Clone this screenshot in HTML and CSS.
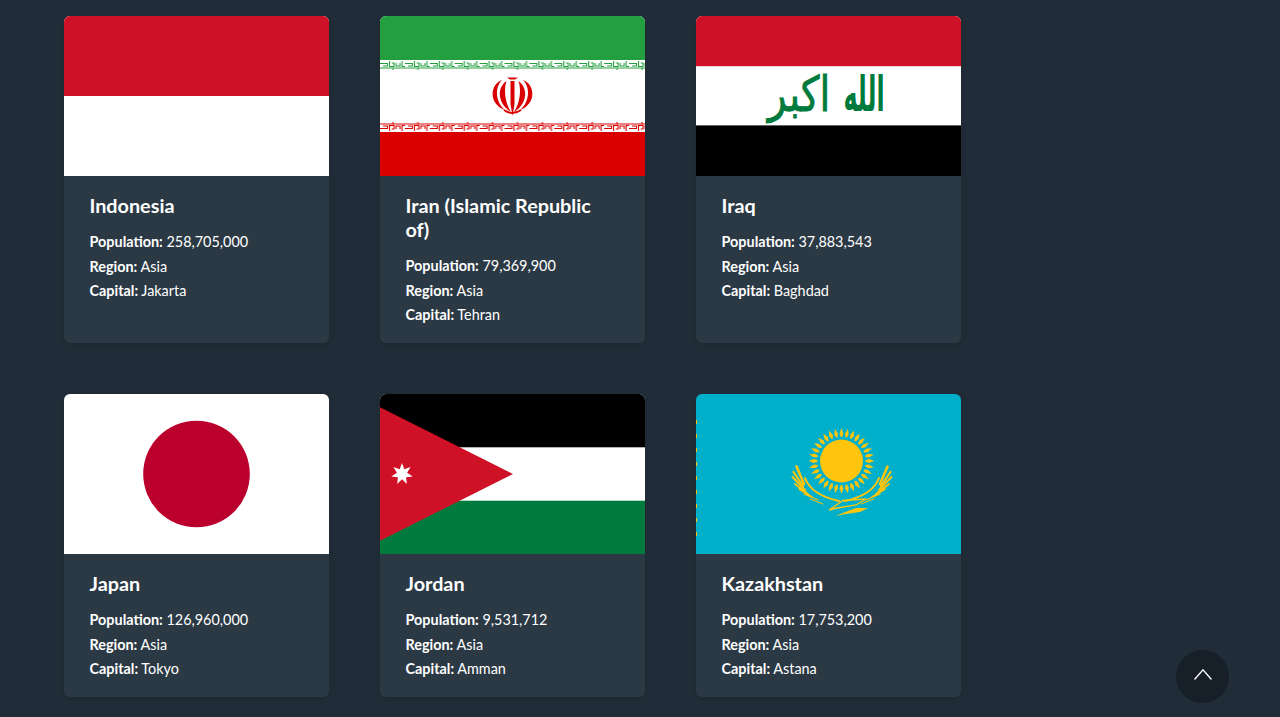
FILE: index.html
```html
<!DOCTYPE html>
<html lang="en">
  <head>
    <meta charset="UTF-8" />
    <meta name="viewport" content="width=device-width, initial-scale=1.0" />
    <title>Countries</title>
    <link rel="stylesheet" href="styles.css">
  </head>
  <body>
    <main class="country-grid">
      <!-- Indonesia -->
      <article class="card">
        <svg class="flag" viewBox="0 0 265 160" role="img" aria-label="Flag of Indonesia">
          <rect width="265" height="160" fill="#fff" />
          <rect width="265" height="80" fill="#ce1126" />
        </svg>
        <div class="card-body">
          <h2>Indonesia</h2>
          <p><b>Population:</b> 258,705,000</p>
          <p><b>Region:</b> Asia</p>
          <p><b>Capital:</b> Jakarta</p>
        </div>
      </article>

      <!-- Iran -->
      <article class="card">
        <svg class="flag" viewBox="0 0 265 160" role="img" aria-label="Flag of Iran">
          <defs>
            <pattern id="kufic-green" width="24.900" height="10" patternUnits="userSpaceOnUse" y="44">
              <path d="M0 3.500H7.500V6H3M9.500 1V6.500H14V3H11.700M16 3V6H20V3M22 1V6.500H24.900M0 8H24.900M13 8V10" stroke="#239f40" stroke-width="1.100" fill="none" />
            </pattern>
            <pattern id="kufic-red" width="24.900" height="10" patternUnits="userSpaceOnUse" y="106">
              <path transform="translate(0 10) scale(1 -1)" d="M0 3.500H7.500V6H3M9.500 1V6.500H14V3H11.700M16 3V6H20V3M22 1V6.500H24.900M0 8H24.900M13 8V10" stroke="#da0000" stroke-width="1.100" fill="none" />
            </pattern>
          </defs>
          <rect width="265" height="160" fill="#fff" />
          <rect width="265" height="44" fill="#239f40" />
          <rect y="116" width="265" height="44" fill="#da0000" />
          <rect y="44" width="265" height="10" fill="url(#kufic-green)" />
          <rect y="106" width="265" height="10" fill="url(#kufic-red)" />
          <g fill="#da0000">
            <path d="M127 61.500H138L135 63.500H130Z" />
            <path d="M130.500 65H134.500V88L132.500 100L130.500 88Z" />
            <path d="M122 64C110 68 108 88 125 94C116 87 114 72 122 64Z" />
            <path d="M143 64C155 68 157 88 140 94C149 87 151 72 143 64Z" />
            <path d="M126.500 65C116.500 72 117.500 88 131 96C125 87 123.500 74 126.500 65Z" />
            <path d="M138.500 65C148.500 72 147.500 88 134 96C140 87 141.500 74 138.500 65Z" />
          </g>
          <path d="M124 94Q132.500 100 141 94" fill="none" stroke="#da0000" stroke-width="1.800" />
        </svg>
        <div class="card-body">
          <h2>Iran (Islamic Republic of)</h2>
          <p><b>Population:</b> 79,369,900</p>
          <p><b>Region:</b> Asia</p>
          <p><b>Capital:</b> Tehran</p>
        </div>
      </article>

      <!-- Iraq -->
      <article class="card">
        <svg class="flag" viewBox="0 0 265 160" role="img" aria-label="Flag of Iraq">
          <rect width="265" height="160" fill="#fff" />
          <rect width="265" height="50.200" fill="#ce1126" />
          <rect y="109.400" width="265" height="50.600" fill="#000" />
          <text class="takbir" transform="translate(168 95) scale(.66 1.350)" text-anchor="middle">الله</text>
          <text class="takbir takbir-thin" transform="translate(103 95) scale(1.080 1.350)" text-anchor="middle">اكبر</text>
        </svg>
        <div class="card-body">
          <h2>Iraq</h2>
          <p><b>Population:</b> 37,883,543</p>
          <p><b>Region:</b> Asia</p>
          <p><b>Capital:</b> Baghdad</p>
        </div>
      </article>

      <!-- Japan -->
      <article class="card">
        <svg class="flag" viewBox="0 0 265 160" role="img" aria-label="Flag of Japan">
          <rect width="265" height="160" fill="#fff" />
          <circle cx="132.500" cy="80" r="53.300" fill="#bc002d" />
        </svg>
        <div class="card-body">
          <h2>Japan</h2>
          <p><b>Population:</b> 126,960,000</p>
          <p><b>Region:</b> Asia</p>
          <p><b>Capital:</b> Tokyo</p>
        </div>
      </article>

      <!-- Jordan -->
      <article class="card">
        <svg class="flag" viewBox="0 0 265 160" role="img" aria-label="Flag of Jordan">
          <rect width="265" height="160" fill="#fff" />
          <rect width="265" height="53.300" fill="#000" />
          <rect y="106.700" width="265" height="53.300" fill="#007a3d" />
          <path d="M0 13.300L133 80L0 146.700Z" fill="#ce1126" />
          <path fill="#fff" d="M22 69L24.300 75.300L30.600 73.100L27.100 78.800L32.700 82.400L26.100 83.200L26.800 89.900L22 85.200L17.200 89.900L17.900 83.200L11.300 82.400L16.900 78.800L13.400 73.100L19.700 75.300Z" />
        </svg>
        <div class="card-body">
          <h2>Jordan</h2>
          <p><b>Population:</b> 9,531,712</p>
          <p><b>Region:</b> Asia</p>
          <p><b>Capital:</b> Amman</p>
        </div>
      </article>

      <!-- Kazakhstan -->
      <article class="card">
        <svg class="flag" viewBox="0 0 265 160" role="img" aria-label="Flag of Kazakhstan">
          <rect width="265" height="160" fill="#00afca" />
          <path d="M.5 26V150" stroke="#fec50c" stroke-width="1" stroke-dasharray="4 10" />
          <circle cx="145.500" cy="67" r="21.500" fill="#fec50c" />
          <g id="sun-rays" fill="#fec50c"></g>
          <g id="wing" fill="none" stroke="#fec50c" stroke-linecap="round">
            <path d="M109 84C113 95 125 103 143 107" stroke-width="2" />
            <path d="M100.500 72.500L108 90" stroke-width="2.600" />
            <path d="M97.500 78L107 92" stroke-width="2.200" />
            <path d="M96.500 83L109 96" stroke-width="2" />
            <path d="M99 90L112 100" stroke-width="1.800" />
            <path d="M103 95L116 103" stroke-width="1.600" />
            <path d="M108 100L122 106" stroke-width="1.300" />
            <path d="M114 105L127 110" stroke-width="1" />
          </g>
          <use href="#wing" transform="translate(292 0) scale(-1 1)" />
          <path d="M133 116L147 106.500L170 105L160 111L141 114Z" fill="none" stroke="#fec50c" stroke-width="1.300" />
          <path d="M139 122L152 117L160 114L172 114L164 118L150 120Z" fill="#fec50c" />
        </svg>
        <div class="card-body">
          <h2>Kazakhstan</h2>
          <p><b>Population:</b> 17,753,200</p>
          <p><b>Region:</b> Asia</p>
          <p><b>Capital:</b> Astana</p>
        </div>
      </article>
    </main>

    <button class="to-top" aria-label="Back to top">
      <svg viewBox="0 0 20 12" width="20" height="12">
        <path d="M1.500 10.500L10 .8L18.500 10.500" fill="none" stroke="#fff" stroke-width="1.300" />
      </svg>
    </button>

    <script>
      // 32 sun rays for the Kazakh flag
      const rays = document.getElementById("sun-rays");
      for (let i = 0; i < 32; i++) {
        const ray = document.createElementNS("http://www.w3.org/2000/svg", "path");
        ray.setAttribute("d", "M145.500 34L147.400 39.500L146.200 43H144.800L143.600 39.500Z");
        ray.setAttribute("transform", `rotate(${i * 11.25} 145.500 67)`);
        rays.appendChild(ray);
      }
    </script>
  </body>
</html>
```
FILE: styles.css
```css
* {
  box-sizing: border-box;
}

body {
  margin: 0;
  height: 717px;
  overflow: hidden;
  background: #202c37;
  color: #fff;
  font-family: Lato, "Noto Sans", sans-serif;
}

.country-grid {
  display: grid;
  grid-template-columns: repeat(3, 265px);
  gap: 51px;
  padding: 16px 64px 0;
}

.card {
  display: flex;
  flex-direction: column;
  background: #2b3945;
  border-radius: 6px;
  overflow: hidden;
  box-shadow: 0 2px 6px rgba(0, 0, 0, 0.08);
}

.flag {
  display: block;
  width: 265px;
  height: 160px;
  flex: none;
}

.takbir {
  font-family: "DejaVu Sans", sans-serif;
  font-size: 36px;
  font-weight: 700;
  fill: #007a3d;
}

.takbir-thin {
  font-weight: 400;
  stroke: #007a3d;
  stroke-width: 0.6px;
}

.card-body {
  padding: 16.500px 40px 15.500px 25.500px;
}

.card-body h2 {
  margin: 0 0 13.500px;
  font-size: 19.800px;
  line-height: 24px;
  font-weight: 700;
}

.card-body p {
  margin: 0;
  font-size: 14.400px;
  line-height: 24.500px;
}

.card-body b {
  font-weight: 700;
}

.to-top {
  position: fixed;
  left: 1176px;
  top: 650px;
  width: 53px;
  height: 53px;
  padding: 0 0 4px;
  border: none;
  border-radius: 50%;
  background: #172029;
  display: flex;
  align-items: center;
  justify-content: center;
  cursor: pointer;
}
```
